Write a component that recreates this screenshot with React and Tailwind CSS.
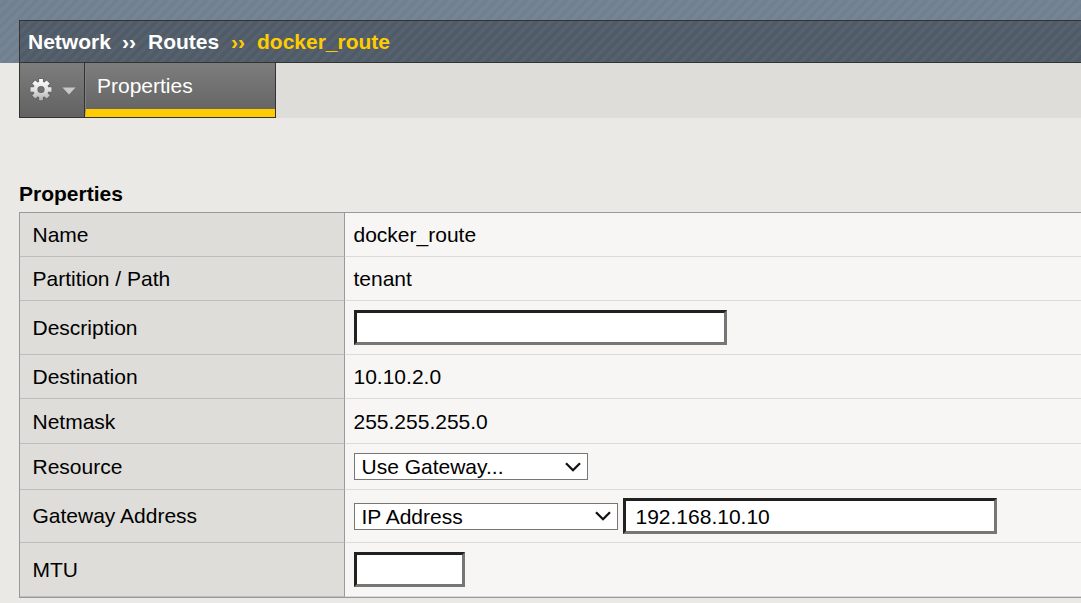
import React from "react";

const stripes =
  "bg-[repeating-linear-gradient(135deg,rgba(255,255,255,0.04)_0px,rgba(255,255,255,0.04)_3.535px,transparent_3.535px,transparent_7.071px)]";

function Row({ label, height, children, pad = "" }) {
  return (
    <div className={`flex ${height}`}>
      <div className={`flex w-[325px] shrink-0 items-center border-r border-b border-r-[#999] border-b-[#bdbdbb] bg-[#deddd9] pl-[12.5px] ${pad}`}>
        {label}
      </div>
      <div className={`flex grow items-center border-b border-[#dbdbda] bg-[#f7f6f5] ${pad}`}>
        {children}
      </div>
    </div>
  );
}

function Value({ children }) {
  return <span className="pl-[8.5px]">{children}</span>;
}

function Select({ value, width }) {
  return (
    <button className={`ml-[9px] flex h-[27px] items-center justify-between border border-[#767676] bg-white pr-[6px] pl-[6.5px] leading-none ${width}`}>
      <span>{value}</span>
      <svg width="16" height="10" viewBox="0 0 16 10" fill="none" stroke="#111" strokeWidth="2.3">
        <path d="M1 1.2 L8 8.2 L15 1.2" />
      </svg>
    </button>
  );
}

const field =
  "border-[3px] border-t-[#212121] border-l-[#212121] border-r-[#767676] border-b-[#767676] bg-white outline-none";

function Gear() {
  return (
    <svg width="24" height="24" viewBox="0 0 24 24">
      <defs>
        <linearGradient id="metal" x1="0" y1="0" x2="0" y2="1">
          <stop offset="0" stopColor="#fff" />
          <stop offset="0.55" stopColor="#dedede" />
          <stop offset="1" stopColor="#b0b0b0" />
        </linearGradient>
      </defs>
      <path
        fill="url(#metal)"
        fillRule="evenodd"
        stroke="#555"
        strokeOpacity="0.45"
        strokeWidth="1.6"
        paintOrder="stroke"
        d="M10.1 1h3.8v3l1.5.6 2.2-2.1 3.2 3.1-2.2 2.2.6 1.5h3.3v4.4h-3.3l-.6 1.5 2.2 2.2-3.2 3.1-2.2-2.1-1.5.6v3.2h-3.8V19l-1.6-.6-2.2 2.1-3.1-3.1 2.2-2.2-.6-1.5H1.5V9.3h3.3l.6-1.5-2.2-2.2 3.1-3.1 2.2 2.1 1.6-.6zM12 7.9a3.6 3.6 0 1 0 0 7.2 3.6 3.6 0 0 0 0-7.2z"
      />
    </svg>
  );
}

export default function App() {
  return (
    <div className="h-[603px] w-full overflow-hidden bg-[#eae9e5] font-['Liberation_Sans',Arial,sans-serif] text-[21px] leading-6 text-black">
      <div className={`h-[63px] bg-[#708090] pt-5 pl-[19px] ${stripes}`}>
        <div className={`flex h-[43px] items-center border-y border-l border-[#333] bg-[#4f5b67] pl-2 font-bold whitespace-pre text-white ${stripes}`}>
          <span className="w-[94px]">Network</span>
          <span className="w-[26px]">››</span>
          <span className="w-[83px]">Routes</span>
          <span className="w-[26px] text-[#fc0]">››</span>
          <span className="text-[#fc0]">docker_route</span>
        </div>
      </div>
      <div className="ml-[19px] flex h-[55px] bg-[#deddd9]">
        <div className="flex w-[66px] items-center border-x border-b border-[#333] bg-linear-to-b from-[#7d7d7d] to-[#626262] pl-[9px]">
          <Gear />
          <svg className="mt-[2px] ml-[9px]" width="14" height="8" viewBox="0 0 14 8">
            <path d="M0.5 0.5h13L7 7.5z" fill="#c8c8c8" />
          </svg>
        </div>
        <div className="w-[191px] border-r border-b border-[#333] bg-linear-to-b from-[#7d7d7d] to-[#626262]">
          <div className="h-[54px] border-b-8 border-l border-b-[#fc0] border-l-[#808080] pt-[11px] pl-[11px] text-white">Properties</div>
        </div>
      </div>
      <h2 className="mt-16 ml-[19px] h-[30px] font-bold">Properties</h2>
      <div className="ml-[19px] border-y border-l border-[#999]">
        <Row label="Name" height="h-11"><Value>docker_route</Value></Row>
        <Row label="Partition / Path" height="h-11"><Value>tenant</Value></Row>
        <Row label="Description" height="h-[54px]">
          <input aria-label="Description" className={`ml-[9px] h-[35px] w-[373px] ${field}`} />
        </Row>
        <Row label="Destination" height="h-11"><Value>10.10.2.0</Value></Row>
        <Row label="Netmask" height="h-[45px]" pad="pt-px"><Value>255.255.255.0</Value></Row>
        <Row label="Resource" height="h-[46px]">
          <Select value="Use Gateway..." width="w-[234px]" />
        </Row>
        <Row label="Gateway Address" height="h-[53px]">
          <Select value="IP Address" width="w-[264px]" />
          <input aria-label="Gateway" defaultValue="192.168.10.10" className={`ml-[5px] h-9 w-[374px] pt-[2px] pl-[9.5px] ${field}`} />
        </Row>
        <Row label="MTU" height="h-[54px]">
          <input aria-label="MTU" className={`ml-[9px] h-[35px] w-[111px] ${field}`} />
        </Row>
      </div>
    </div>
  );
}
